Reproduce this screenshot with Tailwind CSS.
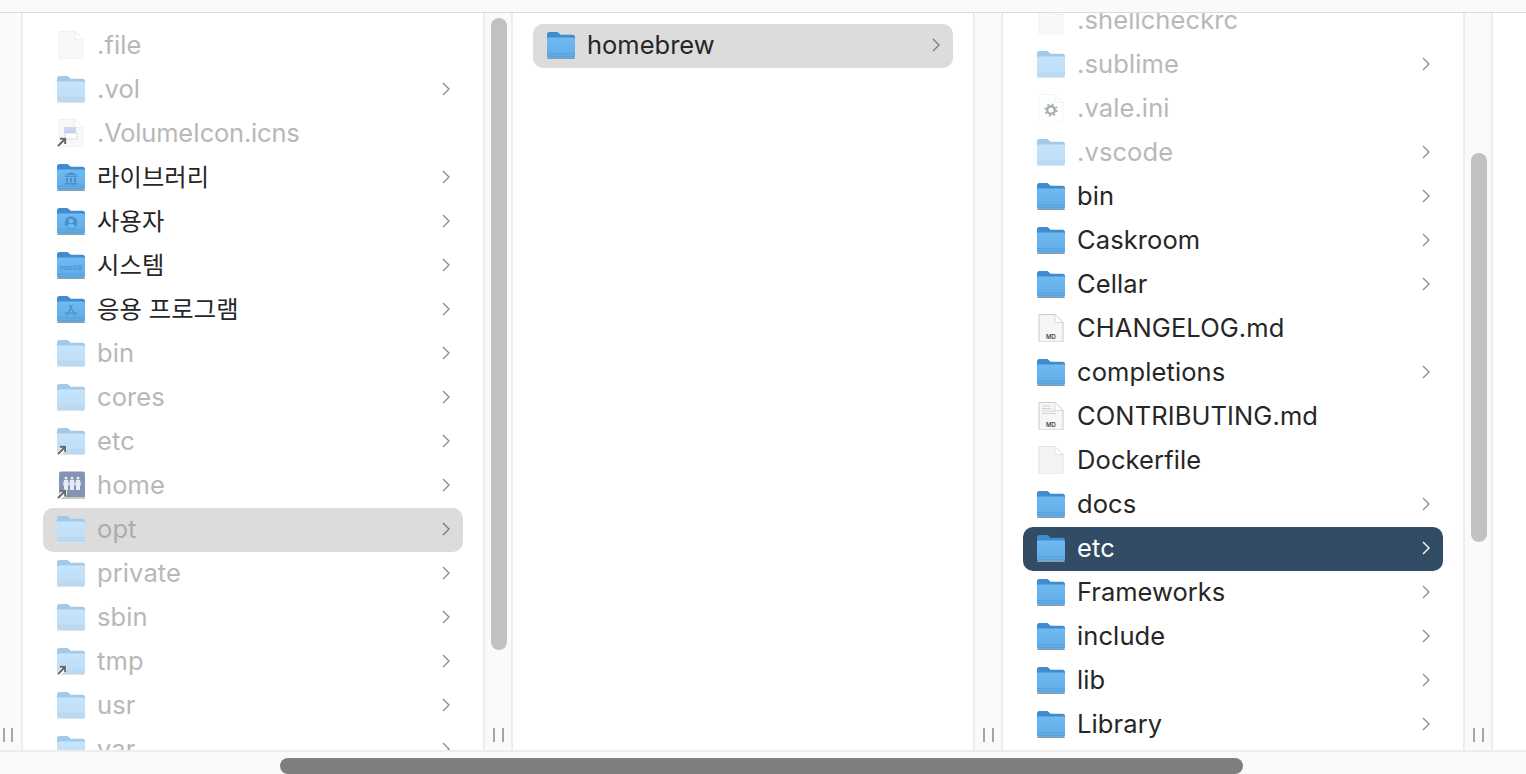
<!DOCTYPE html>
<html lang="ko">
<head>
    <meta charset="UTF-8">
    <meta name="viewport" content="width=device-width, initial-scale=1.0">
    <title>Finder</title>
    <script src="https://cdn.jsdelivr.net/npm/@tailwindcss/browser@4"></script>
</head>
<body class="w-[1526px] h-[774px] overflow-hidden bg-white flex flex-col font-['Inter','Noto_Sans_CJK_KR',sans-serif] text-[25.5px] tracking-[0.1px] text-[#262626]">
    <!-- icon sprites: not display:none, gradients stop resolving with it -->
    <svg class="absolute w-0 h-0" width="0" height="0">
        <defs>
            <linearGradient id="body" x1="0" y1="0" x2="0" y2="1">
                <stop offset="0" stop-color="#6fbaf1"/>
                <stop offset="1" stop-color="#5fabe6"/>
            </linearGradient>
            <linearGradient id="body-dim" x1="0" y1="0" x2="0" y2="1">
                <stop offset="0" stop-color="#c6e4fb"/>
                <stop offset="1" stop-color="#bcdcf6"/>
            </linearGradient>
            <symbol id="folder" viewBox="0 0 30 28">
                <rect x="1" y="27" width="28" height="1" rx=".5" fill="#8f9aa5"/>
                <path d="M1 3.500a2.500 2.500 0 0 1 2.500-2.500h7c1 0 1.600.4 2.300 1.100l1.700 1.700h12a2.500 2.500 0 0 1 2.500 2.500v5H1z" fill="#3f8dd0"/>
                <rect x="1" y="6.500" width="28" height="20.500" rx="1.800" fill="url(#body)"/>
                <rect x="1" y="22.500" width="28" height=".7" fill="#529cd6"/>
                <rect x="1" y="24.800" width="28" height=".7" fill="#529cd6"/>
            </symbol>
            <symbol id="folder-dim" viewBox="0 0 30 28">
                <rect x="1" y="27" width="28" height="1" rx=".5" fill="#dfe2e5"/>
                <path d="M1 3.500a2.500 2.500 0 0 1 2.500-2.500h7c1 0 1.600.4 2.300 1.100l1.700 1.700h12a2.500 2.500 0 0 1 2.500 2.500v5H1z" fill="#a3c9e8"/>
                <rect x="1" y="6.500" width="28" height="20.500" rx="1.800" fill="url(#body-dim)"/>
                <rect x="1" y="22.500" width="28" height=".7" fill="#b0d3ef"/>
                <rect x="1" y="24.800" width="28" height=".7" fill="#b0d3ef"/>
            </symbol>
            <symbol id="page" viewBox="0 0 30 28">
                <path d="M3 .5h16l8 8V27a1 1 0 0 1-1 1H4a1 1 0 0 1-1-1z" fill="#f8f8f8" stroke="#eeeeee" stroke-width=".8"/>
                <path d="M19 .5v8h8z" fill="#fff" stroke="#ececec" stroke-width=".8"/>
            </symbol>
            <symbol id="page-white" viewBox="0 0 30 28">
                <path d="M3 .5h16l8 8V27a1 1 0 0 1-1 1H4a1 1 0 0 1-1-1z" fill="#fff" stroke="#f1f1f1" stroke-width=".8"/>
                <path d="M19 .5v8h8z" fill="#fff" stroke="#efefef" stroke-width=".8"/>
            </symbol>
            <symbol id="page-mid" viewBox="0 0 30 28">
                <path d="M3 .5h16l8 8V27a1 1 0 0 1-1 1H4a1 1 0 0 1-1-1z" fill="#f4f4f4" stroke="#dfdfdf" stroke-width=".9"/>
                <path d="M19 .5v8h8z" fill="#fff" stroke="#dedede" stroke-width=".8"/>
            </symbol>
            <symbol id="page-strong" viewBox="0 0 30 28">
                <path d="M3 .5h16l8 8V27a1 1 0 0 1-1 1H4a1 1 0 0 1-1-1z" fill="#f6f6f6" stroke="#c4c4c4" stroke-width=".9"/>
                <path d="M19 .5v8h8z" fill="#fff" stroke="#cfcfcf" stroke-width=".8"/>
            </symbol>
            <symbol id="alias" viewBox="0 0 30 28">
                <path d="M0 26.500 7 18.500h4v5.500l-8 4.500H1z" fill="#fff"/>
                <path d="M2 27 8.500 20.500M4 19.800h5.200v5.200" fill="none" stroke="#6a6a6a" stroke-width="2"/>
            </symbol>
            <symbol id="chev" viewBox="0 0 8 14">
                <path d="M1 1l6 6-6 6" fill="none" stroke="currentColor" stroke-width="1.400"/>
            </symbol>
        </defs>
    </svg>

    <header class="h-[13px] shrink-0 bg-[#fafafa] border-b border-[#dcdcdc]"></header>

    <main class="flex flex-1 min-h-0">
        <div class="w-[23px] shrink-0 bg-[#fafafa] border-r-2 border-[#ededed] flex flex-col">
            <div class="mt-auto mb-[8px] ml-[3px] flex gap-[6px]"><i class="block w-[2px] h-[14px] bg-[#a6a6a6]"></i><i class="block w-[2px] h-[14px] bg-[#a6a6a6]"></i></div>
        </div>

        <!-- column 1 -->
        <section class="w-[460px] shrink-0 overflow-hidden pt-[11px] text-[#b8b8b8]">
            <div class="h-11 mx-5 px-[13px] pb-[2px] flex items-center gap-[11px]">
                <svg class="w-[30px] h-[28px] shrink-0"><use href="#page"/></svg><span>.file</span>
            </div>
            <div class="h-11 mx-5 px-[13px] pb-[2px] flex items-center gap-[11px]">
                <svg class="w-[30px] h-[28px] shrink-0"><use href="#folder-dim"/></svg><span>.vol</span>
                <svg class="w-2 h-[14px] ml-auto text-[#8f8f8f]"><use href="#chev"/></svg>
            </div>
            <div class="h-11 mx-5 px-[13px] pb-[2px] flex items-center gap-[11px]">
                <svg class="w-[30px] h-[28px] shrink-0" viewBox="0 0 30 28">
                    <use href="#page" width="30" height="28"/>
                    <rect x="8" y="8" width="12" height="6" fill="#c9d6f0"/>
                    <rect x="9" y="14" width="12" height="6" fill="#fff" stroke="#a8a8a8" stroke-width=".6" stroke-dasharray="1.500 1"/>
                    <use href="#alias" width="30" height="28"/>
                </svg><span class="tracking-[-0.2px]">.VolumeIcon.icns</span>
            </div>
            <div class="h-11 mx-5 px-[13px] pb-[2px] flex items-center gap-[11px] text-[#262626]">
                <svg class="w-[30px] h-[28px] shrink-0" viewBox="0 0 30 28">
                    <use href="#folder" width="30" height="28"/>
                    <path d="M15 9l7 3.200H8zM9 13h12v1H9zM10 15h2v4.500h-2zM14 15h2v4.500h-2zM18 15h2v4.500h-2zM8.500 20h13v1.500h-13z" fill="#4a90cb"/>
                </svg><span class="text-[24.3px]">라이브러리</span>
                <svg class="w-2 h-[14px] ml-auto text-[#8f8f8f]"><use href="#chev"/></svg>
            </div>
            <div class="h-11 mx-5 px-[13px] pb-[2px] flex items-center gap-[11px] text-[#262626]">
                <svg class="w-[30px] h-[28px] shrink-0" viewBox="0 0 30 28">
                    <use href="#folder" width="30" height="28"/>
                    <circle cx="15" cy="15.500" r="6.300" fill="#4a90cb"/>
                    <circle cx="15" cy="14" r="2.300" fill="#6fbaf1"/>
                    <path d="M10.800 19.500c.8-2 2.400-2.800 4.200-2.800s3.400.8 4.200 2.800a6 6 0 0 1-8.400 0z" fill="#6fbaf1"/>
                </svg><span class="text-[24.3px]">사용자</span>
                <svg class="w-2 h-[14px] ml-auto text-[#8f8f8f]"><use href="#chev"/></svg>
            </div>
            <div class="h-11 mx-5 px-[13px] pb-[2px] flex items-center gap-[11px] text-[#262626]">
                <svg class="w-[30px] h-[28px] shrink-0" viewBox="0 0 30 28">
                    <use href="#folder" width="30" height="28"/>
                    <text x="15" y="18.500" text-anchor="middle" font-size="6.500" font-weight="600" fill="#4a90cb" letter-spacing="0">macOS</text>
                </svg><span class="text-[24.3px]">시스템</span>
                <svg class="w-2 h-[14px] ml-auto text-[#8f8f8f]"><use href="#chev"/></svg>
            </div>
            <div class="h-11 mx-5 px-[13px] pb-[2px] flex items-center gap-[11px] text-[#262626]">
                <svg class="w-[30px] h-[28px] shrink-0" viewBox="0 0 30 28">
                    <use href="#folder" width="30" height="28"/>
                    <path d="M16.500 10 10.500 21M13.500 10 19.500 21M8.500 18h13" fill="none" stroke="#4a90cb" stroke-width="1.200"/>
                </svg><span class="text-[24.3px]">응용 프로그램</span>
                <svg class="w-2 h-[14px] ml-auto text-[#8f8f8f]"><use href="#chev"/></svg>
            </div>
            <div class="h-11 mx-5 px-[13px] pb-[2px] flex items-center gap-[11px]">
                <svg class="w-[30px] h-[28px] shrink-0"><use href="#folder-dim"/></svg><span>bin</span>
                <svg class="w-2 h-[14px] ml-auto text-[#8f8f8f]"><use href="#chev"/></svg>
            </div>
            <div class="h-11 mx-5 px-[13px] pb-[2px] flex items-center gap-[11px]">
                <svg class="w-[30px] h-[28px] shrink-0"><use href="#folder-dim"/></svg><span>cores</span>
                <svg class="w-2 h-[14px] ml-auto text-[#8f8f8f]"><use href="#chev"/></svg>
            </div>
            <div class="h-11 mx-5 px-[13px] pb-[2px] flex items-center gap-[11px]">
                <svg class="w-[30px] h-[28px] shrink-0"><use href="#folder-dim"/><use href="#alias"/></svg><span>etc</span>
                <svg class="w-2 h-[14px] ml-auto text-[#8f8f8f]"><use href="#chev"/></svg>
            </div>
            <div class="h-11 mx-5 px-[13px] pb-[2px] flex items-center gap-[11px]">
                <svg class="w-[30px] h-[28px] shrink-0" viewBox="0 0 30 28">
                    <path d="M3 2.500a2 2 0 0 1 2-2h22a2 2 0 0 1 2 2V26H5a2 2 0 0 1-2-2z" fill="#8594b2"/>
                    <path d="M3 24a2 2 0 0 0 2 2h24v2H5a2 2 0 0 1-2-2z" fill="#c3cdb8"/>
                    <g fill="#e6ebf4">
                        <circle cx="10" cy="7" r="1.500"/><circle cx="16" cy="7" r="1.500"/><circle cx="22" cy="7" r="1.500"/>
                        <path d="M8 9h4l1 5-1 .5V19H8v-4.500l-1-.5zM14 9h4l1 5-1 .5V19h-4v-4.500l-1-.5zM20 9h4l1 5-1 .5V19h-4v-4.500l-1-.5z"/>
                    </g>
                    <use href="#alias" width="30" height="28"/>
                </svg><span>home</span>
                <svg class="w-2 h-[14px] ml-auto text-[#8f8f8f]"><use href="#chev"/></svg>
            </div>
            <div class="h-11 mx-5 px-[13px] pb-[2px] flex items-center gap-[11px] rounded-[10px] bg-[#dcdcdc] text-[#acacac]">
                <svg class="w-[30px] h-[28px] shrink-0"><use href="#folder-dim"/></svg><span>opt</span>
                <svg class="w-2 h-[14px] ml-auto text-[#7c7c7c]"><use href="#chev"/></svg>
            </div>
            <div class="h-11 mx-5 px-[13px] pb-[2px] flex items-center gap-[11px]">
                <svg class="w-[30px] h-[28px] shrink-0"><use href="#folder-dim"/></svg><span>private</span>
                <svg class="w-2 h-[14px] ml-auto text-[#8f8f8f]"><use href="#chev"/></svg>
            </div>
            <div class="h-11 mx-5 px-[13px] pb-[2px] flex items-center gap-[11px]">
                <svg class="w-[30px] h-[28px] shrink-0"><use href="#folder-dim"/></svg><span>sbin</span>
                <svg class="w-2 h-[14px] ml-auto text-[#8f8f8f]"><use href="#chev"/></svg>
            </div>
            <div class="h-11 mx-5 px-[13px] pb-[2px] flex items-center gap-[11px]">
                <svg class="w-[30px] h-[28px] shrink-0"><use href="#folder-dim"/><use href="#alias"/></svg><span>tmp</span>
                <svg class="w-2 h-[14px] ml-auto text-[#8f8f8f]"><use href="#chev"/></svg>
            </div>
            <div class="h-11 mx-5 px-[13px] pb-[2px] flex items-center gap-[11px]">
                <svg class="w-[30px] h-[28px] shrink-0"><use href="#folder-dim"/></svg><span>usr</span>
                <svg class="w-2 h-[14px] ml-auto text-[#8f8f8f]"><use href="#chev"/></svg>
            </div>
            <div class="h-11 mx-5 px-[13px] pb-[2px] flex items-center gap-[11px]">
                <svg class="w-[30px] h-[28px] shrink-0"><use href="#folder-dim"/></svg><span>var</span>
                <svg class="w-2 h-[14px] ml-auto text-[#8f8f8f]"><use href="#chev"/></svg>
            </div>
        </section>

        <div class="w-[30px] shrink-0 bg-[#fafafa] border-x-2 border-[#ededed] flex flex-col">
            <div class="mt-[5px] ml-[6px] w-4 h-[632px] rounded-full bg-[#c1c1c1]"></div>
            <div class="mt-auto mb-[8px] ml-[8px] flex gap-[7px]"><i class="block w-[2px] h-[14px] bg-[#a6a6a6]"></i><i class="block w-[2px] h-[14px] bg-[#a6a6a6]"></i></div>
        </div>

        <!-- column 2 -->
        <section class="w-[460px] shrink-0 overflow-hidden pt-[11px]">
            <div class="h-11 mx-5 px-[13px] pb-[2px] flex items-center gap-[11px] rounded-[10px] bg-[#dcdcdc]">
                <svg class="w-[30px] h-[28px] shrink-0"><use href="#folder"/></svg><span class="tracking-normal">homebrew</span>
                <svg class="w-2 h-[14px] ml-auto text-[#7c7c7c]"><use href="#chev"/></svg>
            </div>
        </section>

        <div class="w-[30px] shrink-0 bg-[#fafafa] border-x-2 border-[#ededed] flex flex-col">
            <div class="mt-auto mb-[8px] ml-[8px] flex gap-[7px]"><i class="block w-[2px] h-[14px] bg-[#a6a6a6]"></i><i class="block w-[2px] h-[14px] bg-[#a6a6a6]"></i></div>
        </div>

        <!-- column 3 -->
        <section class="w-[460px] shrink-0 overflow-hidden">
            <div class="-mt-[14px] h-11 mx-5 px-[13px] pb-[2px] flex items-center gap-[11px] text-[#b8b8b8]">
                <svg class="w-[30px] h-[28px] shrink-0"><use href="#page"/></svg><span>.shellcheckrc</span>
            </div>
            <div class="h-11 mx-5 px-[13px] pb-[2px] flex items-center gap-[11px] text-[#b8b8b8]">
                <svg class="w-[30px] h-[28px] shrink-0"><use href="#folder-dim"/></svg><span>.sublime</span>
                <svg class="w-2 h-[14px] ml-auto text-[#8f8f8f]"><use href="#chev"/></svg>
            </div>
            <div class="h-11 mx-5 px-[13px] pb-[2px] flex items-center gap-[11px] text-[#b8b8b8]">
                <svg class="w-[30px] h-[28px] shrink-0" viewBox="0 0 30 28">
                    <use href="#page-white" width="30" height="28"/>
                    <circle cx="15" cy="16" r="3.800" fill="none" stroke="#a3aeb5" stroke-width="2.400"/>
                    <circle cx="15" cy="16" r="5.800" fill="none" stroke="#a3aeb5" stroke-width="1.600" stroke-dasharray="2 2.550"/>
                </svg><span>.vale.ini</span>
            </div>
            <div class="h-11 mx-5 px-[13px] pb-[2px] flex items-center gap-[11px] text-[#b8b8b8]">
                <svg class="w-[30px] h-[28px] shrink-0"><use href="#folder-dim"/></svg><span>.vscode</span>
                <svg class="w-2 h-[14px] ml-auto text-[#8f8f8f]"><use href="#chev"/></svg>
            </div>
            <div class="h-11 mx-5 px-[13px] pb-[2px] flex items-center gap-[11px]">
                <svg class="w-[30px] h-[28px] shrink-0"><use href="#folder"/></svg><span>bin</span>
                <svg class="w-2 h-[14px] ml-auto text-[#8f8f8f]"><use href="#chev"/></svg>
            </div>
            <div class="h-11 mx-5 px-[13px] pb-[2px] flex items-center gap-[11px]">
                <svg class="w-[30px] h-[28px] shrink-0"><use href="#folder"/></svg><span>Caskroom</span>
                <svg class="w-2 h-[14px] ml-auto text-[#8f8f8f]"><use href="#chev"/></svg>
            </div>
            <div class="h-11 mx-5 px-[13px] pb-[2px] flex items-center gap-[11px]">
                <svg class="w-[30px] h-[28px] shrink-0"><use href="#folder"/></svg><span>Cellar</span>
                <svg class="w-2 h-[14px] ml-auto text-[#8f8f8f]"><use href="#chev"/></svg>
            </div>
            <div class="h-11 mx-5 px-[13px] pb-[2px] flex items-center gap-[11px]">
                <svg class="w-[30px] h-[28px] shrink-0" viewBox="0 0 30 28">
                    <use href="#page-strong" width="30" height="28"/>
                    <text x="15" y="25" text-anchor="middle" font-size="6" font-weight="600" fill="#4a4a4a" letter-spacing="0">MD</text>
                </svg><span>CHANGELOG.md</span>
            </div>
            <div class="h-11 mx-5 px-[13px] pb-[2px] flex items-center gap-[11px]">
                <svg class="w-[30px] h-[28px] shrink-0"><use href="#folder"/></svg><span>completions</span>
                <svg class="w-2 h-[14px] ml-auto text-[#8f8f8f]"><use href="#chev"/></svg>
            </div>
            <div class="h-11 mx-5 px-[13px] pb-[2px] flex items-center gap-[11px]">
                <svg class="w-[30px] h-[28px] shrink-0" viewBox="0 0 30 28">
                    <use href="#page-strong" width="30" height="28"/>
                    <path d="M6 4h9M6 6.500h9M6 9h14M6 11.500h14" stroke="#d2d2d2" stroke-width="1"/>
                    <text x="15" y="25" text-anchor="middle" font-size="6" font-weight="600" fill="#4a4a4a" letter-spacing="0">MD</text>
                </svg><span>CONTRIBUTING.md</span>
            </div>
            <div class="h-11 mx-5 px-[13px] pb-[2px] flex items-center gap-[11px]">
                <svg class="w-[30px] h-[28px] shrink-0"><use href="#page-mid"/></svg><span>Dockerfile</span>
            </div>
            <div class="h-11 mx-5 px-[13px] pb-[2px] flex items-center gap-[11px]">
                <svg class="w-[30px] h-[28px] shrink-0"><use href="#folder"/></svg><span>docs</span>
                <svg class="w-2 h-[14px] ml-auto text-[#8f8f8f]"><use href="#chev"/></svg>
            </div>
            <div class="h-11 mx-5 px-[13px] pb-[2px] flex items-center gap-[11px] rounded-[10px] bg-[#324c66] text-white">
                <svg class="w-[30px] h-[28px] shrink-0"><use href="#folder"/></svg><span>etc</span>
                <svg class="w-2 h-[14px] ml-auto text-white"><use href="#chev"/></svg>
            </div>
            <div class="h-11 mx-5 px-[13px] pb-[2px] flex items-center gap-[11px]">
                <svg class="w-[30px] h-[28px] shrink-0"><use href="#folder"/></svg><span class="tracking-normal">Frameworks</span>
                <svg class="w-2 h-[14px] ml-auto text-[#8f8f8f]"><use href="#chev"/></svg>
            </div>
            <div class="h-11 mx-5 px-[13px] pb-[2px] flex items-center gap-[11px]">
                <svg class="w-[30px] h-[28px] shrink-0"><use href="#folder"/></svg><span>include</span>
                <svg class="w-2 h-[14px] ml-auto text-[#8f8f8f]"><use href="#chev"/></svg>
            </div>
            <div class="h-11 mx-5 px-[13px] pb-[2px] flex items-center gap-[11px]">
                <svg class="w-[30px] h-[28px] shrink-0"><use href="#folder"/></svg><span>lib</span>
                <svg class="w-2 h-[14px] ml-auto text-[#8f8f8f]"><use href="#chev"/></svg>
            </div>
            <div class="h-11 mx-5 px-[13px] pb-[2px] flex items-center gap-[11px]">
                <svg class="w-[30px] h-[28px] shrink-0"><use href="#folder"/></svg><span>Library</span>
                <svg class="w-2 h-[14px] ml-auto text-[#8f8f8f]"><use href="#chev"/></svg>
            </div>
        </section>

        <div class="w-[30px] shrink-0 bg-[#fafafa] border-x-2 border-[#ededed] flex flex-col">
            <div class="mt-[140px] ml-[6px] w-4 h-[389px] rounded-full bg-[#c1c1c1]"></div>
            <div class="mt-auto mb-[8px] ml-[8px] flex gap-[7px]"><i class="block w-[2px] h-[14px] bg-[#a6a6a6]"></i><i class="block w-[2px] h-[14px] bg-[#a6a6a6]"></i></div>
        </div>
    </main>

    <footer class="h-6 shrink-0 bg-[#fafafa] border-t-2 border-[#ededed] flex items-end">
        <div class="ml-[280px] w-[963px] h-4 rounded-full bg-[#7f7f7f]"></div>
    </footer>
</body>
</html>
